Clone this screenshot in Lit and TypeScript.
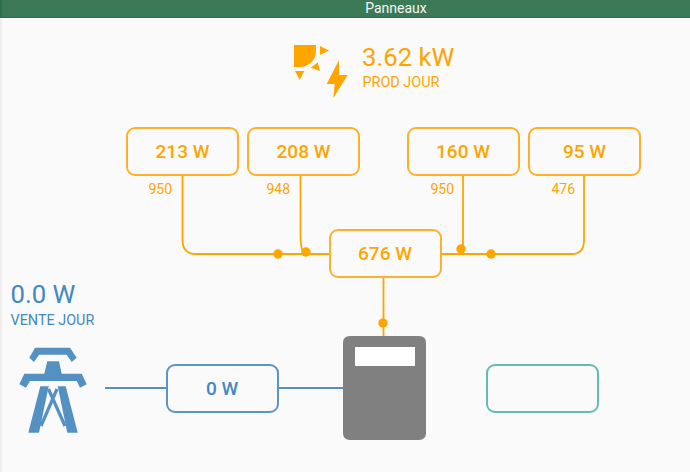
import { LitElement, html, css, svg } from "lit";
import { customElement } from "lit/decorators.js";

const ORANGE = "#ffa500";
const BLUE = "#5490c2";

const pts = (list: number[][], ox: number, oy: number) =>
  list.map(([x, y]) => `${(x / 3 + ox).toFixed(1)},${(y / 3 + oy).toFixed(1)}`).join(" ");

@customElement("app-root")
export class AppRoot extends LitElement {
  static styles = css`
    :host {
      display: block;
      width: 690px;
      height: 472px;
      overflow: hidden;
      font-family: Roboto, "Liberation Sans", sans-serif;
      background: #fafafa;
    }
    .header {
      height: 17px;
      background: #3c7a57;
      border-bottom: 1px solid #1d7440;
      border-left: 2px solid #2c7049;
      color: #f2f7f4;
      font-size: 14px;
      line-height: 17px;
      text-align: center;
      padding-left: 100px;
    }
    .stage {
      position: relative;
      height: 454px;
      border-top: 1px solid #fff;
      border-left: 2px solid #eeeeee;
      box-sizing: border-box;
    }
    .wires {
      position: absolute;
      left: -2px;
      top: -19px;
      width: 690px;
      height: 472px;
    }
    .node {
      position: absolute;
      width: 113px;
      height: 49px;
      box-sizing: border-box;
      border: 2px solid #ffb02a;
      border-radius: 9px;
      color: #ffa500;
      background: #fafafa;
      display: flex;
      align-items: center;
      justify-content: center;
      font-size: 19px;
      font-weight: 500;
    }
    .node.blue { border-color: #5a95c6; color: #4488c0; }
    .node.teal { border-color: #62bcb3; }
    .tag {
      position: absolute;
      color: #ffa500;
      font-size: 14px;
      line-height: 16px;
    }
    .big { position: absolute; font-size: 25.7px; line-height: 30px; white-space: nowrap; }
    .small { position: absolute; font-size: 14.4px; line-height: 16px; white-space: nowrap; }
    .prod { color: #ffa500; }
    .sell { color: #4488c0; }
  `;

  private node(x: number, y: number, label: string, cls = "") {
    return html`<div class="node ${cls}" style="left:${x - 2}px;top:${y - 19}px">${label}</div>`;
  }

  private text(cls: string, x: number, y: number, label: string) {
    return html`<div class=${cls} style="left:${x - 2}px;top:${y - 19}px">${label}</div>`;
  }

  render() {
    const dots = [[278, 254], [306, 252], [461, 249], [491, 254], [383, 323]];
    return html`
      <div class="header">Panneaux</div>
      <div class="stage">
        <svg class="wires" viewBox="0 0 690 472">
          <g fill="none" stroke=${ORANGE} stroke-width="1.8">
            <path d="M182.500 175V240Q182.500 254 196 254H330" />
            <path d="M300.500 175V236Q300.500 246 303 252" />
            <path d="M463 175V246" />
            <path d="M440 254H458Q463 253 463 250M455 254H572Q584 254 584 240V175" />
            <path d="M383.500 276V337" />
          </g>
          <g stroke=${BLUE} stroke-width="1.8">
            <path d="M105 388H167M277 388H344" />
          </g>
          <g fill=${ORANGE}>
            ${dots.map(([x, y]) => svg`<circle cx=${x} cy=${y} r="4.7" />`)}
            <path d="M294 45H316V51A16 16 0 0 1 300 67H294Z" />
            <polygon points="320,46 329,50.500 320,55" />
            <polygon points="310.700,67.700 317.700,62.300 320,71" />
            <polygon points="295,71 304.300,71 299.700,80" />
            <polygon points="339,60 326.700,84 334.700,84 333.300,98.300 347.700,75 339,75" />
          </g>
          <g fill=${BLUE}>
            <polygon points=${pts([[60,17],[165,17],[185,47],[170,60],[155,38],[72,38],[57,60],[43,47]], 15, 342)} />
            <polygon points=${pts([[97,58],[132,58],[140,95],[200,95],[215,127],[195,137],[185,117],[45,117],[33,137],[13,127],[28,95],[88,95]], 15, 342)} />
            <polygon points=${pts([[76,133],[101,133],[72,272],[40,272]], 15, 342)} />
            <polygon points=${pts([[128,133],[152,133],[188,272],[157,272]], 15, 342)} />
          </g>
          <g stroke=${BLUE} stroke-width="3.200" fill="none">
            <path d="M48.500 389L65 426M57 389L41 426" />
          </g>
          <path fill="#808080" d="M350 336H419Q426 336 426 343V433Q426 440 419 440H350Q343 440 343 433V343Q343 336 350 336Z" />
          <rect x="355" y="347" width="60" height="19" fill="#ffffff" />
        </svg>
        ${this.node(126, 127, "213 W")}
        ${this.node(247, 127, "208 W")}
        ${this.node(406.500, 127, "160 W")}
        ${this.node(528, 127, "95 W")}
        ${this.node(328.500, 229, "676 W")}
        ${this.node(165.500, 364, "0 W", "blue")}
        ${this.node(486, 364, "", "teal")}
        ${this.text("tag", 148.500, 181, "950")}
        ${this.text("tag", 266.500, 181, "948")}
        ${this.text("tag", 430.500, 181, "950")}
        ${this.text("tag", 551.500, 181, "476")}
        ${this.text("big prod", 362, 42, "3.62 kW")}
        ${this.text("small prod", 362.500, 75, "PROD JOUR")}
        ${this.text("big sell", 10.500, 279, "0.0 W")}
        ${this.text("small sell", 10.500, 313, "VENTE JOUR")}
      </div>
    `;
  }
}
